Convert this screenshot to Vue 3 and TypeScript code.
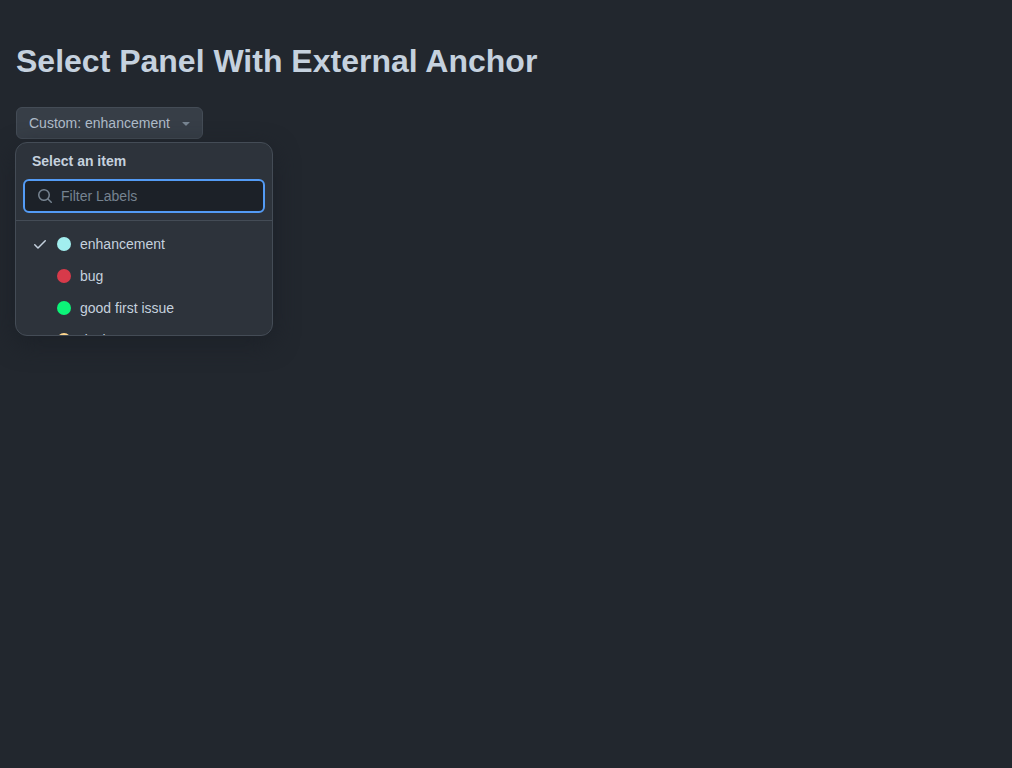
<script setup lang="ts">
interface Label {
  name: string
  color: string
  selected?: boolean
}

const labels: Label[] = [
  { name: 'enhancement', color: '#a2eeef', selected: true },
  { name: 'bug', color: '#d73a4a' },
  { name: 'good first issue', color: '#0cf478' },
  { name: 'design', color: '#ffd78e' },
]
</script>

<template>
  <main class="page">
    <h1>Select Panel With External Anchor</h1>
    <button class="anchor" type="button">
      <span>Custom: enhancement</span>
      <svg width="16" height="16" viewBox="0 0 16 16" fill="currentColor">
        <path d="m4.427 7.427 3.396 3.396a.25.25 0 0 0 .354 0l3.396-3.396A.25.25 0 0 0 11.396 7H4.604a.25.25 0 0 0-.177.427Z" />
      </svg>
    </button>
    <section class="panel">
      <h2>Select an item</h2>
      <div class="filter">
        <svg width="16" height="16" viewBox="0 0 16 16" fill="currentColor">
          <path d="M10.68 11.74a6 6 0 0 1-7.922-8.982 6 6 0 0 1 8.982 7.922l3.04 3.04a.749.749 0 0 1-.326 1.275.749.749 0 0 1-.734-.215ZM11.5 7a4.499 4.499 0 1 0-8.997 0A4.499 4.499 0 0 0 11.5 7Z" />
        </svg>
        <input type="text" placeholder="Filter Labels" />
      </div>
      <ul>
        <li v-for="label in labels" :key="label.name">
          <span class="check">
            <svg v-if="label.selected" width="16" height="16" viewBox="0 0 16 16" fill="currentColor">
              <path d="M13.78 4.22a.75.75 0 0 1 0 1.06l-7.25 7.25a.75.75 0 0 1-1.06 0L2.22 9.28a.751.751 0 0 1 .018-1.042.751.751 0 0 1 1.042-.018L6 10.94l6.72-6.72a.75.75 0 0 1 1.06 0Z" />
            </svg>
          </span>
          <span class="dot" :style="{ backgroundColor: label.color }"></span>
          <span>{{ label.name }}</span>
        </li>
      </ul>
    </section>
  </main>
</template>

<style>
body {
  background: #22272e;
}
</style>

<style scoped>
.page {
  box-sizing: border-box;
  height: 768px;
  padding: 37px 15px 0;
  overflow: hidden;
  background: #22272e;
  color: #c5d1de;
  font: 14px/20px "Liberation Sans", Arial, sans-serif;
}
svg {
  flex: none;
}
h1 {
  margin: 0 1px 22px;
  font-size: 32px;
  line-height: 48px;
  font-weight: 700;
}
.anchor {
  display: flex;
  align-items: center;
  gap: 8px;
  box-sizing: border-box;
  width: 187px;
  height: 32px;
  margin: 0 0 3px 1px;
  padding: 0 8px 0 12px;
  border: 1px solid #444c56;
  border-radius: 6px;
  background: #373e47;
  color: #adbac7;
  font: inherit;
  white-space: nowrap;
}
.anchor svg {
  color: #768390;
}
.panel {
  box-sizing: border-box;
  width: 258px;
  height: 194px;
  overflow: hidden;
  border: 1px solid #444c56;
  border-radius: 12px;
  background: #2d333b;
  box-shadow: 0 8px 24px #1c2128;
}
h2 {
  margin: 8px 16px;
  font-size: 14px;
  line-height: 20px;
}
.filter {
  display: flex;
  align-items: center;
  gap: 8px;
  box-sizing: border-box;
  height: 34px;
  margin: 0 7px 7px;
  padding: 0 12px;
  border: 2px solid #539bf5;
  border-radius: 6px;
  background: #1c2128;
  color: #768390;
}
input {
  width: 100%;
  min-width: 0;
  padding: 0;
  border: 0;
  outline: 0;
  background: transparent;
  color: #adbac7;
  font: inherit;
}
input::placeholder {
  color: #768390;
}
ul {
  margin: 0;
  padding: 7px 8px;
  border-top: 1px solid #444c56;
  list-style: none;
}
li {
  display: flex;
  align-items: center;
  height: 32px;
  padding: 0 8px;
}
.check {
  display: flex;
  width: 16px;
  margin-right: 9px;
}
.dot {
  width: 14px;
  height: 14px;
  margin-right: 9px;
  border-radius: 50%;
}
</style>
